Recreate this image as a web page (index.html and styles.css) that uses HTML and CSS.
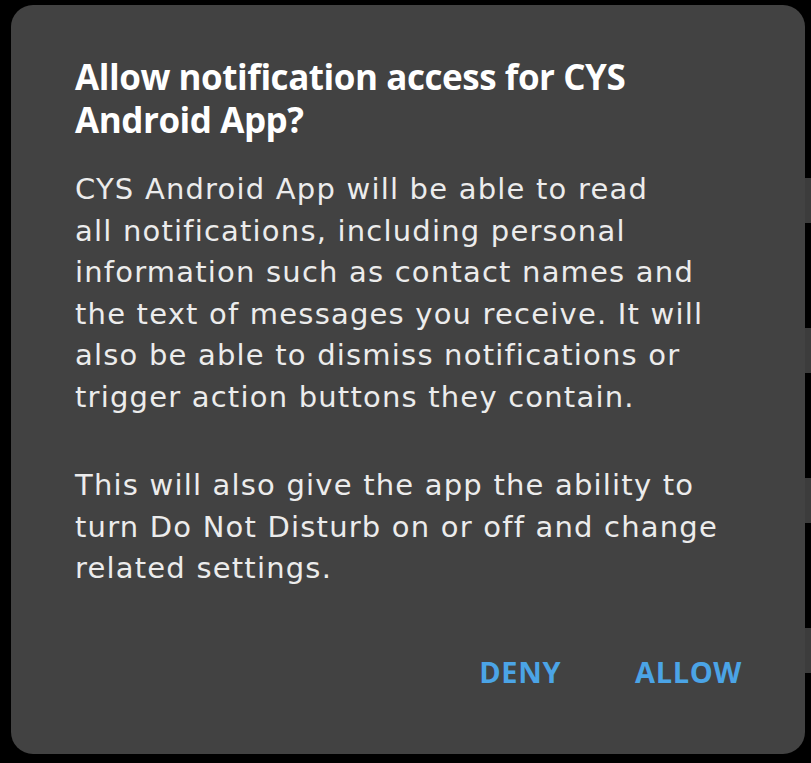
FILE: index.html
```html
<!DOCTYPE html>
<html>
<head>
<meta charset="utf-8">
<link rel="stylesheet" href="styles.css">
</head>
<body>
<div class="screen">
  <div class="dialog">
    <h1 class="title">Allow notification access for CYS<br>Android App?</h1>
    <p class="message">CYS Android App will be able to read<br>all notifications, including personal<br>information such as contact names and<br>the text of messages you receive. It will<br>also be able to dismiss notifications or<br>trigger action buttons they contain.</p>
    <p class="message second">This will also give the app the ability to<br>turn Do Not Disturb on or off and change<br>related settings.</p>
    <div class="actions">
      <span class="btn">DENY</span>
      <span class="btn">ALLOW</span>
    </div>
  </div>
  <div class="edge">
    <div class="tab"></div>
    <div class="tab"></div>
    <div class="tab"></div>
    <div class="tab"></div>
  </div>
</div>
</body>
</html>
```

FILE: styles.css
```css
html, body {
  margin: 0;
  padding: 0;
  background: #000;
}
body {
  width: 811px;
  height: 763px;
  overflow: hidden;
  font-family: "Open Sans", "Noto Sans", sans-serif;
}
.screen {
  display: flex;
  padding: 5px 0 0 11px;
}
.dialog {
  width: 794px;
  height: 749px;
  box-sizing: border-box;
  background: #424242;
  border-radius: 22px;
  padding: 50px 20px 0 64px;
  flex-shrink: 0;
  white-space: nowrap;
}
.title {
  margin: 0;
  font-size: 35px;
  line-height: 43px;
  font-weight: 700;
  color: #ffffff;
  letter-spacing: -0.45px;
}
.message {
  margin: 28px 0 0 0;
  font-family: "DejaVu Sans", "Open Sans", sans-serif;
  font-size: 29px;
  line-height: 41.5px;
  color: #ececec;
  font-weight: 400;
  letter-spacing: 1.2px;
}
.message.second {
  margin-top: 47px;
}
.actions {
  display: flex;
  justify-content: flex-end;
  gap: 74px;
  margin-top: 65px;
  padding-right: 43px;
}
.btn {
  font-size: 29px;
  line-height: 34px;
  font-weight: 700;
  color: #4ba4e6;
  letter-spacing: 0.6px;
}
.edge {
  display: flex;
  flex-direction: column;
  gap: 105px;
  padding-top: 173px;
}
.tab {
  width: 6px;
  height: 45px;
  background: #3c3c3c;
}
```
